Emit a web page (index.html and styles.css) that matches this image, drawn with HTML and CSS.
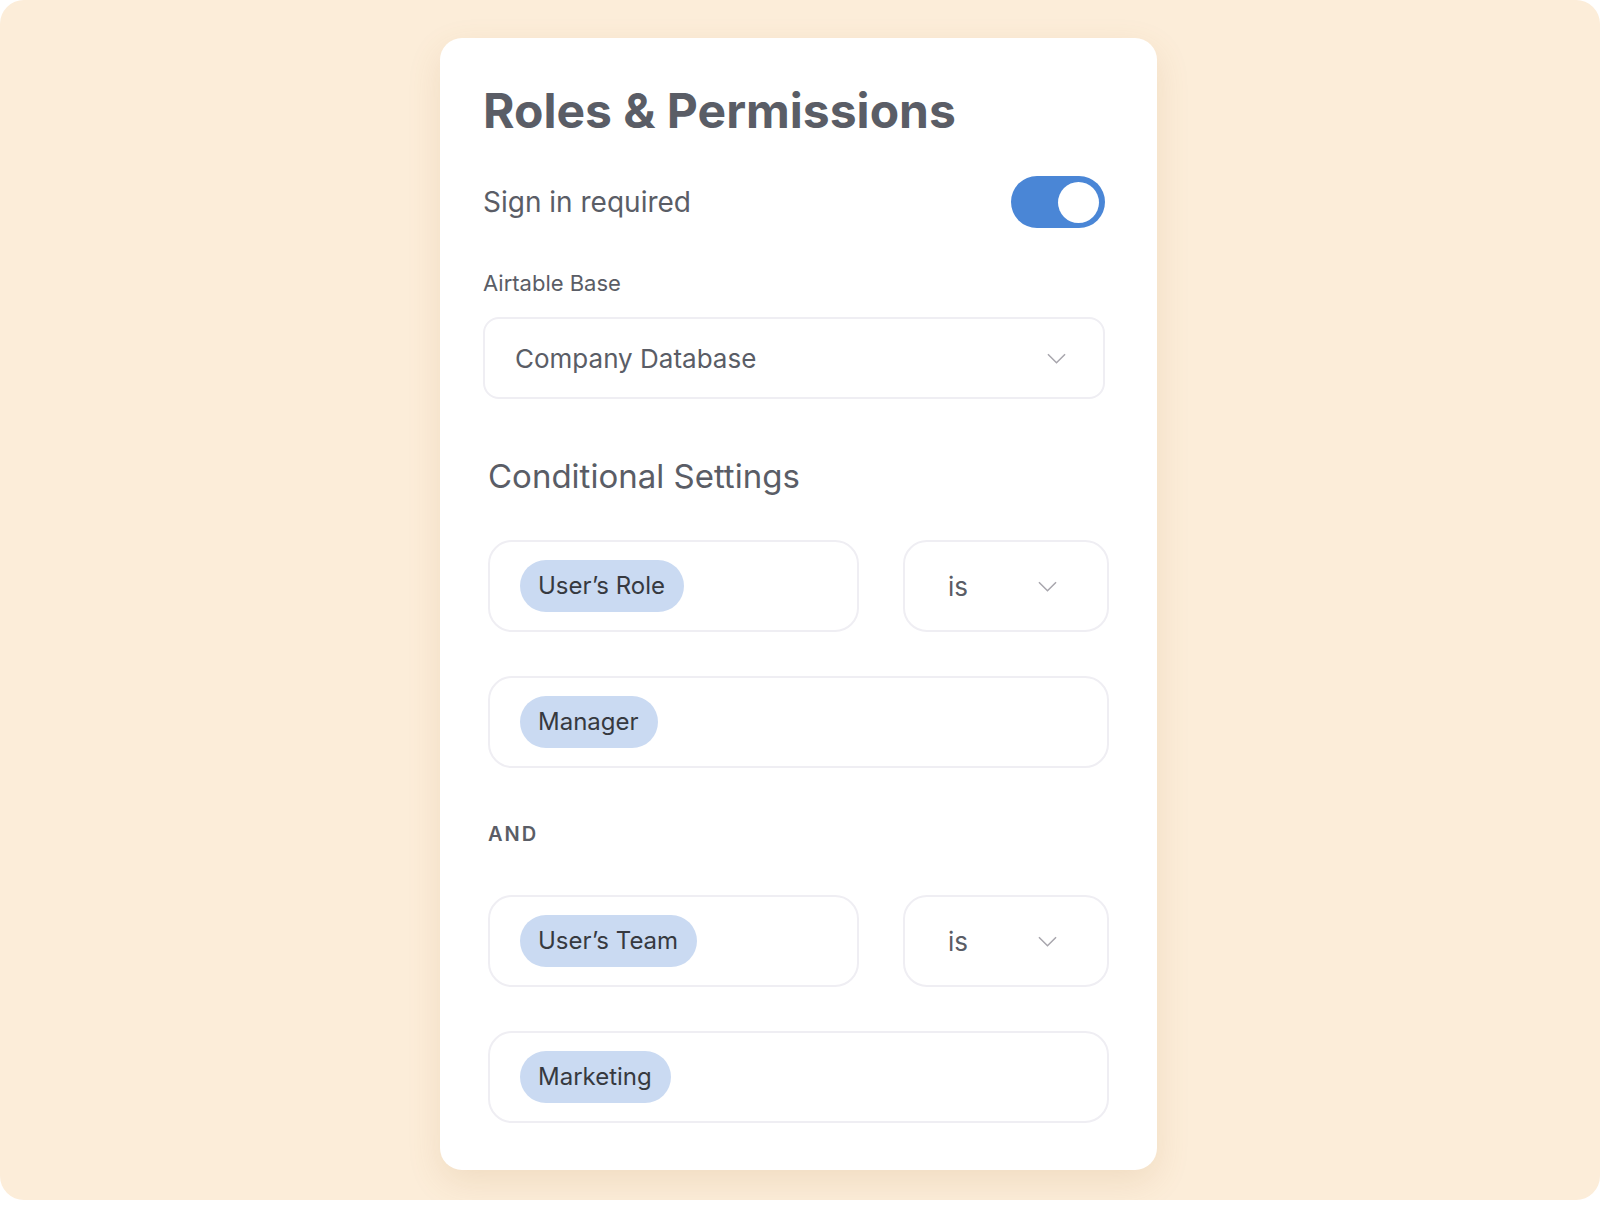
FILE: index.html
```html
<!DOCTYPE html>
<html lang="en">
<head>
    <meta charset="UTF-8">
    <meta name="viewport" content="width=device-width, initial-scale=1.0">
    <title>Roles &amp; Permissions</title>
<link rel="stylesheet" href="styles.css">
</head>
<body>

    <div class="frame">
        <div class="card">
            <h1 class="title">Roles &amp; Permissions</h1>

            <div class="toggle-row">
                <span>Sign in required</span>
                <div class="toggle"><span class="knob"></span></div>
            </div>

            <label class="field-label">Airtable Base</label>
            <div class="select">
                <span>Company Database</span>
                <svg class="chevron" width="20" height="11" viewBox="0 0 20 11"><path d="M1 1l9 9 9-9" /></svg>
            </div>

            <div class="conditions">
                <h2>Conditional Settings</h2>

                <div class="cond-row">
                    <div class="box"><span class="pill">User’s Role</span></div>
                    <div class="box op">
                        <span>is</span>
                        <svg class="chevron" width="20" height="11" viewBox="0 0 20 11"><path d="M1 1l9 9 9-9" /></svg>
                    </div>
                </div>
                <div class="box value"><span class="pill">Manager</span></div>

                <div class="and">AND</div>

                <div class="cond-row">
                    <div class="box"><span class="pill">User’s Team</span></div>
                    <div class="box op">
                        <span>is</span>
                        <svg class="chevron" width="20" height="11" viewBox="0 0 20 11"><path d="M1 1l9 9 9-9" /></svg>
                    </div>
                </div>
                <div class="box value"><span class="pill">Marketing</span></div>
            </div>
        </div>
    </div>

</body>
</html>
```

FILE: styles.css
```css
/* Reset */
* {
    padding: 0;
    margin: 0;
    box-sizing: border-box;
}

body {
    font-family: Inter, "Noto Sans", sans-serif;
    background-color: #fff;
    color: #5a5d66;
}

/* Beige backdrop */
.frame {
    width: 1600px;
    height: 1200px;
    background-color: #fcedd9;
    border-radius: 24px;
    padding: 38px 0 0 440px;
}

/* Main card */
.card {
    width: 717px;
    background-color: #fff;
    border-radius: 22px;
    padding: 44px 52px 47px 43px;
    box-shadow: 0 12px 34px rgba(170, 120, 60, 0.14);
}

.title {
    font-size: 48px;
    line-height: 58px;
    font-weight: 700;
    color: #5a5d66;
    margin-bottom: 36px;
}

/* Sign in toggle */
.toggle-row {
    display: flex;
    justify-content: space-between;
    align-items: center;
    font-size: 28px;
}

.toggle {
    width: 94px;
    height: 52px;
    border-radius: 26px;
    background-color: #4a86d6;
    display: flex;
    justify-content: flex-end;
    align-items: center;
    padding: 0 6px;
}

.knob {
    width: 41px;
    height: 41px;
    border-radius: 50%;
    background-color: #fff;
}

.field-label {
    display: block;
    font-size: 22px;
    line-height: 24px;
    margin-top: 43px;
}

/* Select boxes */
.select {
    margin-top: 22px;
    height: 82px;
    border: 2px solid #efeef3;
    border-radius: 16px;
    display: flex;
    align-items: center;
    justify-content: space-between;
    padding: 0 37px 0 30px;
    font-size: 26px;
}

.chevron {
    width: 19px;
    height: 11px;
    fill: none;
    stroke: #a8a6ad;
    stroke-width: 1.6;
}

/* Conditional settings */
.conditions {
    margin: 0 -4px 0 5px;
}

.conditions h2 {
    font-size: 33px;
    line-height: 40px;
    font-weight: 400;
    margin-top: 57px;
    margin-bottom: 44px;
}

.cond-row {
    display: grid;
    grid-template-columns: 1fr 206px;
    gap: 44px;
    margin-bottom: 44px;
}

.box {
    height: 92px;
    border: 2px solid #efeef3;
    border-radius: 24px;
    display: flex;
    align-items: center;
    padding: 0 30px;
}

.box.op {
    justify-content: space-between;
    padding: 0 50px 0 43px;
    font-size: 26px;
}

.pill {
    height: 52px;
    line-height: 52px;
    padding: 0 19px 0 18px;
    border-radius: 26px;
    background-color: #cadaf2;
    color: #363940;
    font-size: 24px;
}

.and {
    font-size: 20px;
    line-height: 24px;
    font-weight: 600;
    letter-spacing: 2px;
    margin: 54px 0 49px;
}

.cond-row:last-of-type {
    margin-bottom: 44px;
}
```
